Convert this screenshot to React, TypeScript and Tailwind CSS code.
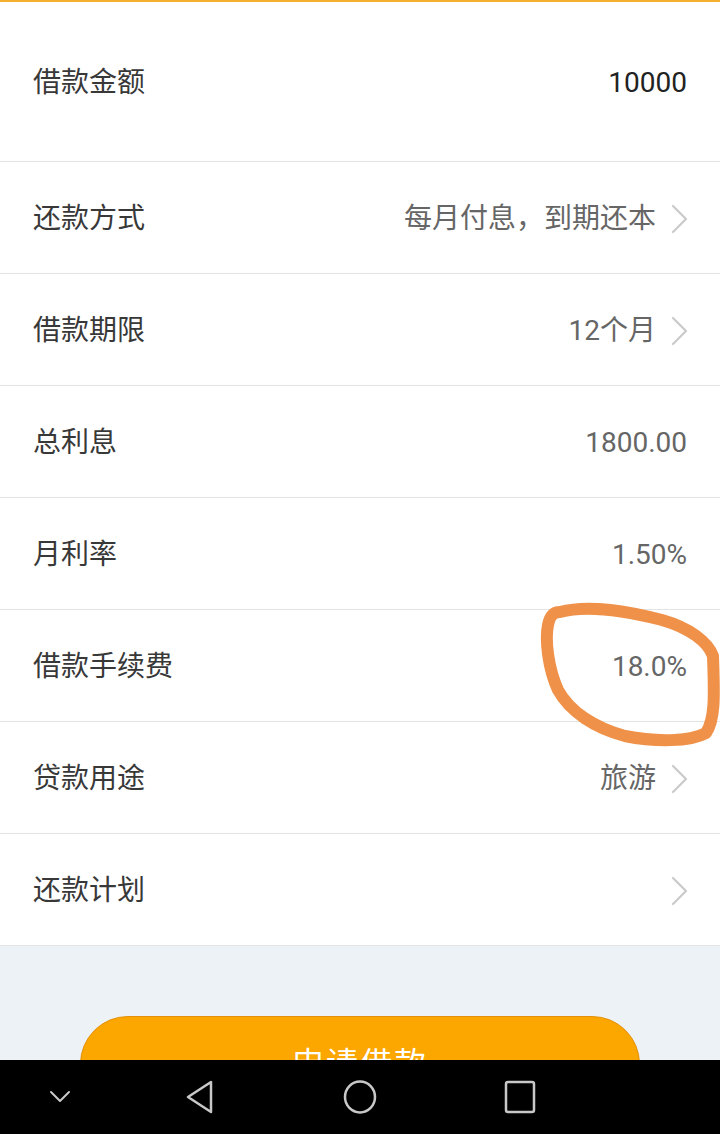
const ROWS = [
  { label: '还款方式', value: '每月付息，到期还本', arrow: true },
  { label: '借款期限', value: '12个月', arrow: true },
  { label: '总利息', value: '1800.00', arrow: false },
  { label: '月利率', value: '1.50%', arrow: false },
  { label: '借款手续费', value: '18.0%', arrow: false },
  { label: '贷款用途', value: '旅游', arrow: true },
  { label: '还款计划', value: '', arrow: true },
];

const font = { fontFamily: 'Roboto, "Noto Sans CJK SC", "Noto Sans", sans-serif' };

function Chevron() {
  return (
    <svg className="ml-[15px] shrink-0" width="17" height="30" viewBox="0 0 17 30" fill="none" stroke="#cacaca" strokeWidth="2.2" strokeLinecap="round" strokeLinejoin="round">
      <path d="M2 2 L15 15 L2 28" />
    </svg>
  );
}

export default function App() {
  return (
    <div className="relative w-[720px] h-[1134px] flex flex-col bg-[#edf2f6] overflow-hidden" style={font}>
      <div className="h-[1060px] shrink-0 overflow-hidden flex flex-col">
        <div className="h-[2px] shrink-0 bg-[#f2b02c]" />

        {/* amount */}
        <div className="h-[160px] shrink-0 bg-white border-b border-[#e4e4e4] flex items-center justify-between px-[33px] pt-[3px]">
          <span className="text-[28px] text-[#383838]">借款金额</span>
          <span className="text-[28px] text-[#222]">10000</span>
        </div>

        {ROWS.map((r) => (
          <div key={r.label} className="h-[112px] shrink-0 bg-white border-b border-[#e4e4e4] flex items-center justify-between pl-[33px] pr-[32px] pt-[3px]">
            <span className="text-[28px] text-[#383838]">{r.label}</span>
            <div className="flex items-center">
              <span className="text-[28px] text-[#666]">{r.value}</span>
              {r.arrow ? <Chevron /> : <span className="w-[1px]" />}
            </div>
          </div>
        ))}

        <div className="shrink-0 pt-[70px] flex justify-center">
          <button className="w-[560px] h-[96px] rounded-[48px] bg-[#fca600] border border-[#e3900a] text-white text-[32px] tracking-[2px]">
            申请借款
          </button>
        </div>
      </div>

      {/* nav bar */}
      <div className="h-[74px] shrink-0 bg-black flex items-center">
        <div className="w-[120px] flex justify-center">
          <svg width="30" height="30" viewBox="0 0 30 30" fill="none" stroke="#c8c8c8" strokeWidth="2" strokeLinecap="round" strokeLinejoin="round">
            <path d="M6 10 L15 19 L24 10" />
          </svg>
        </div>
        <div className="w-[160px] flex justify-center">
          <svg width="32" height="36" viewBox="0 0 32 36" fill="none" stroke="#c8c8c8" strokeWidth="2.5" strokeLinejoin="round">
            <path d="M27 3 L27 33 L4 18 Z" />
          </svg>
        </div>
        <div className="w-[160px] flex justify-center">
          <svg width="36" height="36" viewBox="0 0 36 36" fill="none" stroke="#c8c8c8" strokeWidth="2.5">
            <ellipse cx="18" cy="18" rx="15" ry="15.5" />
          </svg>
        </div>
        <div className="w-[160px] flex justify-center">
          <svg width="32" height="34" viewBox="0 0 32 34" fill="none" stroke="#c8c8c8" strokeWidth="2.5">
            <rect x="2" y="2" width="28" height="30" rx="2" />
          </svg>
        </div>
      </div>

      {/* hand-drawn annotation */}
      <svg className="absolute left-0 top-0 pointer-events-none" width="720" height="1134" viewBox="0 0 720 1134" fill="none">
        <path
          d="M560 612 C 590 604, 630 612, 662 620 C 690 628, 708 642, 713 656 C 714 690, 716 718, 706 733 C 690 742, 655 742, 625 736 C 595 728, 570 712, 558 690 C 548 668, 545 640, 548 625 C 550 615, 554 612, 560 612 Z"
          stroke="#f0914a"
          strokeWidth="12"
          strokeLinecap="round"
          strokeLinejoin="round"
        />
      </svg>
    </div>
  );
}
